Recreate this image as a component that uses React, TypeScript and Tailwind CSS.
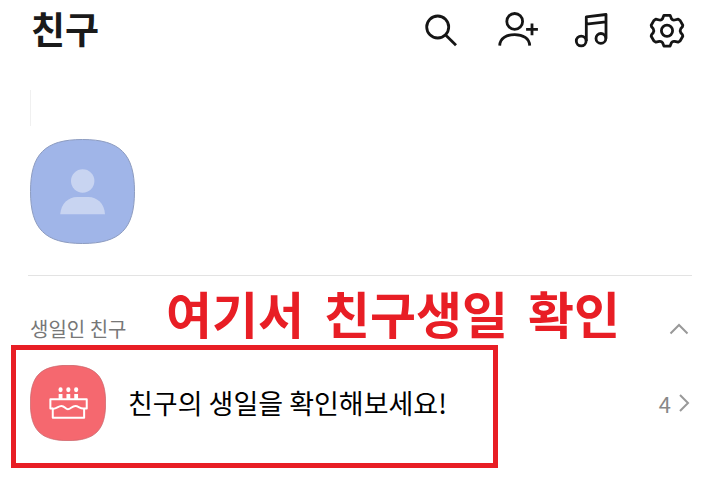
import { useState } from 'react';
import type { ReactNode } from 'react';

interface HeaderAction {
  label: string;
  icon: ReactNode;
}

const headerActions: HeaderAction[] = [
  {
    label: '검색',
    icon: (
      <>
        <circle cx="22.7" cy="21" r="11" />
        <path d="M30.6 29 41 39.2" />
      </>
    ),
  },
  {
    label: '친구 추가',
    icon: (
      <>
        <circle cx="23.7" cy="15.4" r="7.9" />
        <path d="M8.7 39.6C8.9 32.6 15.4 28.6 23.7 28.6S38.5 32.6 38.7 39.6M41 17.4V29.2M35.1 23.3H46.9" />
      </>
    ),
  },
  {
    label: '음악',
    icon: (
      <>
        <circle cx="14.2" cy="35" r="4.9" />
        <circle cx="33.9" cy="32.4" r="4.9" />
        <path d="M19.3 35V10.9L39 8.5V32.4M19.3 18.2 39 15.8" />
      </>
    ),
  },
  {
    label: '설정',
    icon: (
      <>
        <circle cx="24" cy="24.7" r="5.6" />
        <path d="M20.9 9.3H27.1L28.4 12.6Q29.6 14.4 31.6 14L35.2 13.2L37.2 14.6L39.8 19.2L39.4 20.8L37.8 22.6Q36.6 24.7 37.8 26.8L39.4 28.6L39.8 30.2L37.2 34.8L35.2 36.2L31.6 35.4Q29.6 35 28.4 36.8L27.1 40.1H20.9L19.6 36.8Q18.4 35 16.4 35.4L12.8 36.2L10.8 34.8L8.2 30.2L8.6 28.6L10.2 26.8Q11.4 24.7 10.2 22.6L8.6 20.8L8.2 19.2L10.8 14.6L12.8 13.2L16.4 14Q18.4 14.4 19.6 12.6Z" />
      </>
    ),
  },
];

const noteWords = ['여기서', '친구생일', '확인'];

// Rounded "squircle" used behind every profile picture
function Squircle({ className, fill, stroke, children }: { className: string; fill: string; stroke: string; children: ReactNode }) {
  return (
    <svg viewBox="0 0 105 105" className={className} aria-hidden="true">
      <path
        d="M52.5 0.5C90 0.5 104.5 15 104.5 52.5S90 104.5 52.5 104.5S0.5 90 0.5 52.5S15 0.5 52.5 0.5Z"
        fill={fill}
        stroke={stroke}
      />
      {children}
    </svg>
  );
}

function CakeIcon() {
  return (
    <g transform="scale(1.38)" fill="none" stroke="#fff" strokeWidth="2" strokeLinejoin="round">
      <path d="M23 43.6H20.4V34.3H56.8V43.6H54" />
      <path d="M22.8 43.4V52.7H54.2V43.4" />
      <path d="M22.4 43.6C26 44.6 28 41 31.4 41S35.4 44.4 38 44.4S42 41 45.4 41S50.6 44.4 54.4 43.4" />
      <path d="M30.6 29V34M38.4 29V34M46.2 29V34" strokeWidth="3.8" />
      <g fill="#fff" stroke="none">
        <ellipse cx="30.6" cy="24.8" rx="2.1" ry="2.5" />
        <ellipse cx="38.4" cy="24.8" rx="2.1" ry="2.5" />
        <ellipse cx="46.2" cy="24.8" rx="2.1" ry="2.5" />
      </g>
    </g>
  );
}

export default function App() {
  const [open, setOpen] = useState(true);

  return (
    <div className="min-h-screen bg-white pb-10 font-['Noto_Sans_CJK_KR',sans-serif] text-black">
      {/* Header */}
      <header className="flex h-[60px] items-center justify-between pl-[31px] pr-[29px]">
        <h1 className="pb-1 text-[37px] leading-[56px] font-bold text-[#1a1a1a]">친구</h1>
        <nav className="flex gap-7">
          {headerActions.map(action => (
            <button key={action.label} type="button" aria-label={action.label} className="size-12">
              <svg
                viewBox="0 0 48 48"
                className="size-12"
                fill="none"
                stroke="#151515"
                strokeWidth="2.8"
                strokeLinejoin="round"
              >
                {action.icon}
              </svg>
            </button>
          ))}
        </nav>
      </header>

      {/* My profile */}
      <section className="px-[30px] pt-[30px]">
        <div className="h-9 border-l border-[#f0f0f0]" />
        <Squircle className="mt-[13px] size-[105px]" fill="#a0b5e8" stroke="#8d9cc0">
          <circle cx="52.7" cy="42" r="11.7" fill="#c8d4f1" />
          <path d="M30.2 75.3C31 64.5 38.5 58 47 58H58.4C67 58 74.5 64.5 75 75.3Z" fill="#c8d4f1" />
        </Squircle>
      </section>

      <hr className="mt-[31px] mr-7 ml-7 border-[#e3e3e3]" />

      {/* Birthday friends */}
      <section>
        <div className="relative flex h-[69px] items-end justify-between pr-[29px] pl-[30px]">
          <h2 className="text-xl leading-8 text-[#777]">생일인 친구</h2>
          <button
            type="button"
            aria-label="생일인 친구 접기"
            aria-expanded={open}
            onClick={() => setOpen(!open)}
            className="mb-1 size-6"
          >
            <svg viewBox="0 0 24 24" className="size-6" fill="none" stroke="#999" strokeWidth="2">
              <path d="M3.5 16.5 12 8l8.5 8.5" />
            </svg>
          </button>
          <p className="absolute top-1 left-[166px] flex gap-5 text-[50px] leading-[64px] font-bold whitespace-nowrap text-[#e81e25]">
            {noteWords.map(word => (
              <span key={word}>{word}</span>
            ))}
          </p>
        </div>

        {open && (
          <div className="relative">
            <a href="#birthday" className="flex items-center pt-5 pr-[29px] pb-[27px] pl-[30px]">
              <Squircle className="size-[76px]" fill="#f5686f" stroke="#c9656b">
                <CakeIcon />
              </Squircle>
              <span className="ml-[22px] text-[27px] leading-9">친구의 생일을 확인해보세요!</span>
              <span className="ml-auto text-[22px] leading-8 text-[#888]">4</span>
              <svg viewBox="0 0 20 24" className="h-6 w-5" fill="none" stroke="#999" strokeWidth="2" aria-hidden="true">
                <path d="M9 4l8 8-8 8" />
              </svg>
            </a>
            <div className="pointer-events-none absolute inset-y-0 left-[11px] w-[487px] border-5 border-[#e81e25]" />
          </div>
        )}
      </section>
    </div>
  );
}
